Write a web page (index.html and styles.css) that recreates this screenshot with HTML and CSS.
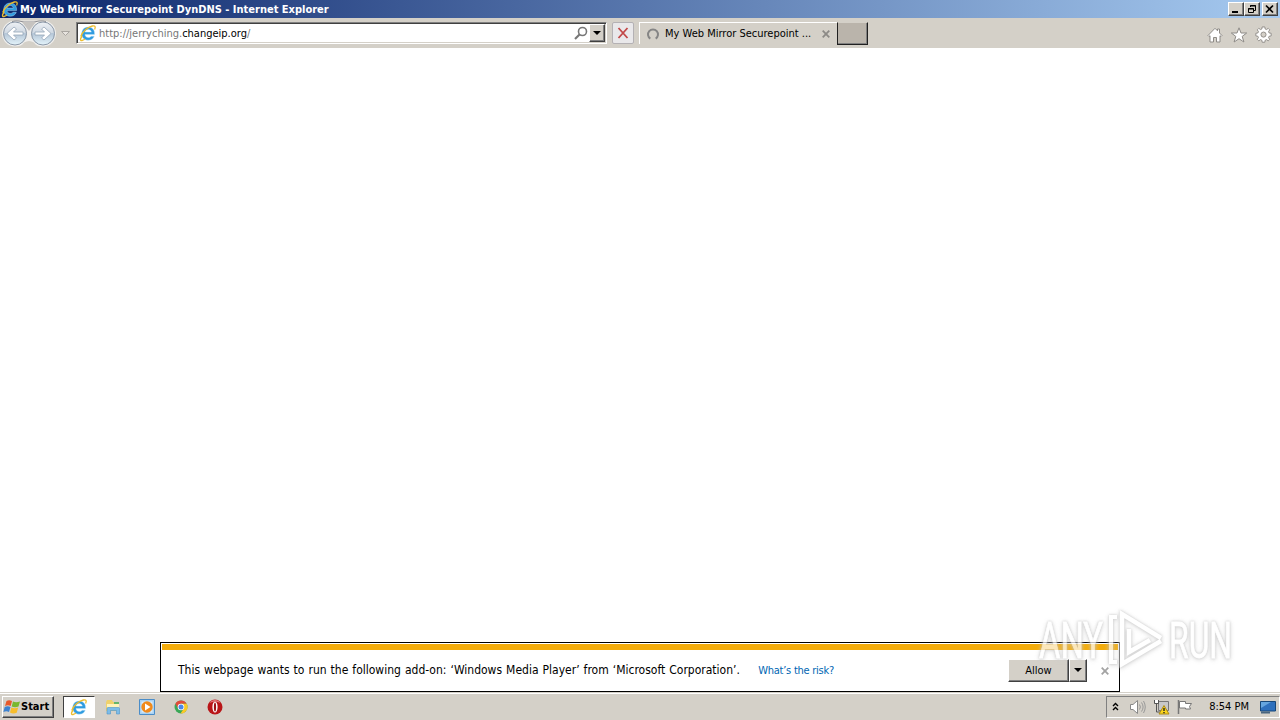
FILE: index.html
```html
<!DOCTYPE html>
<html lang="en">
<head>
    <meta charset="UTF-8">
    <title>My Web Mirror Securepoint DynDNS - Internet Explorer</title>
    <link rel="stylesheet" href="styles.css">
</head>
<body>
    <!-- shared icons -->
    <svg class="defs" width="0" height="0">
        <symbol id="ie" viewBox="0 0 18 18">
            <path d="M15.600 10.600H6c.2 1.900 1.500 2.900 3.300 2.900 1.300 0 2.200-.4 2.800-1.200h3.200c-1 2.500-3.100 3.900-6 3.900-3.900 0-6.600-2.600-6.600-6.500 0-3.900 2.700-6.600 6.600-6.600 4 0 6.600 2.800 6.300 7.500zM6 8.100h6.300C12.100 6.600 10.900 5.600 9.200 5.600S6.300 6.600 6 8.100z" fill="#2f9be0" stroke="#c9eafb" stroke-width=".4"/>
            <path d="M3.200 12C1 14.800.9 16.900 3 16.500c1-.2 2-.8 3-1.500M1.700 12.500C3.600 7.500 8.800 3.200 13.300 2c2.800-.7 3.600.6 2.300 3.400" fill="none" stroke="#edbd2d" stroke-width="1.300"/>
        </symbol>
        <symbol id="cross" viewBox="0 0 8 8">
            <path d="M.7.7l6.600 6.600M7.300.7L.7 7.300" fill="none" stroke="currentColor" stroke-width="1.800"/>
        </symbol>
    </svg>

    <div class="screen">
        <header class="titlebar">
            <svg class="title-icon" width="18" height="18"><use href="#ie"/></svg>
            <span class="title">My Web Mirror Securepoint DynDNS - Internet Explorer</span>
            <div class="window-buttons">
                <button class="win-btn"><svg width="12" height="10"><path d="M2 8h6" stroke="#000" stroke-width="2"/></svg></button>
                <button class="win-btn"><svg width="12" height="10"><path d="M4.500 3V1.500h5v5H8M4 2h6M2.500 4.500h5v4h-5zM2 5h6" fill="none" stroke="#000"/></svg></button>
                <button class="win-btn close"><svg width="12" height="10"><path d="M2 1.500l7 7M9 1.500l-7 7" stroke="#000" stroke-width="1.700"/></svg></button>
            </div>
        </header>

        <nav class="toolbar">
            <svg class="nav-buttons" width="72" height="30">
                <defs>
                    <linearGradient id="orb" x1="0" y1="0" x2="0" y2="1">
                        <stop offset="0" stop-color="#eef1f5"/>
                        <stop offset=".48" stop-color="#cfd8e2"/>
                        <stop offset=".5" stop-color="#b5c6d7"/>
                        <stop offset="1" stop-color="#e4f4fb"/>
                    </linearGradient>
                </defs>
                <path d="M15 2.500h28a13 13 0 0 1 0 26q-7 0-9-4-5-3-10 0-2 4-9 4a13 13 0 0 1 0-26z" fill="#efeeec"/>
                <path d="M12 3.500q3-1 7-.5l5 1h10l5-1q4-.5 7 .5" fill="none" stroke="#8f8f93"/>
                <path d="M22 4h14l-7 9z" fill="#c6c3c0"/>
                <circle cx="15" cy="15.500" r="11.500" fill="url(#orb)" stroke="#8b98a8"/>
                <circle cx="43" cy="15.500" r="11.500" fill="url(#orb)" stroke="#8b98a8"/>
                <path d="M7 15.500l7-6.500 2.500 2-3 3H23v3h-9.500l3 3-2.500 2z" fill="#fff" stroke="#95a6b8" stroke-width=".8"/>
                <path d="M51 15.500l-7-6.500-2.500 2 3 3H35v3h9.500l-3 3 2.500 2z" fill="#fff" stroke="#95a6b8" stroke-width=".8"/>
                <path d="M61.500 13.500h8l-4 4z" fill="#e8e4df" stroke="#aaa6a1"/>
            </svg>
            <div class="address">
                <svg class="address-icon" width="18" height="18"><use href="#ie"/></svg>
                <span class="url">http://jerryching.<b>changeip.org</b>/</span>
                <svg class="search" width="14" height="14"><circle cx="8.500" cy="5.500" r="4" fill="#fff" stroke="#777" stroke-width="1.600"/><path d="M5.500 8.500L1 13" stroke="#777" stroke-width="2.200"/></svg>
                <button class="drop"><svg width="8" height="4"><path d="M0 0h8L4 4z"/></svg></button>
            </div>
            <button class="stop"><svg width="12" height="12" viewBox="0 0 12 12"><path d="M1.500 1l9 10M10.500 1l-9 10" stroke="#c24848" stroke-width="1.800"/></svg></button>
            <div class="tab">
                <svg width="14" height="14"><path d="M4.300 11.700a5 5 0 1 1 5.400 0" fill="none" stroke="#858585" stroke-width="2"/></svg>
                <span class="tab-title">My Web Mirror Securepoint ...</span>
                <svg class="tab-close" width="8" height="8"><use href="#cross"/></svg>
            </div>
            <button class="new-tab"></button>
            <div class="tools">
                <svg width="16" height="16"><path d="M1 8.500L8 1.300l2.500 2.500V2h2v4L15 8.500l-1 1-1-.8V15H9.500v-4.500h-3V15H3V8.700l-1 .8z" fill="#fff" stroke="#8e8b87"/></svg>
                <svg width="18" height="16"><path d="M9 .8l2 5.200h5.700l-4.500 3.400 1.700 5.600L9 11.700 4.100 15l1.700-5.600L1.300 6H7z" fill="#fff" stroke="#8e8b87"/></svg>
                <svg width="17" height="17" viewBox="0 0 18 18">
                    <path d="M7.600 1h2.800l.4 2.200 1.300.6 1.900-1.300 1.600 1.600-1.300 1.900.6 1.300 2.200.4v2.800l-2.200.4-.6 1.300 1.300 1.900-1.600 1.600-1.900-1.300-1.300.6-.4 2.200H7.600l-.4-2.200-1.300-.6L4 15.700l-1.600-1.600 1.300-1.900-.6-1.300L.9 10.500V7.700l2.200-.4L3.700 6 2.400 4.100 4 2.500l1.900 1.300 1.300-.6z" fill="#fff" stroke="#8e8b87"/>
                    <circle cx="9" cy="9.100" r="2.700" fill="#d4d0c8" stroke="#8e8b87"/>
                </svg>
            </div>
        </nav>

        <main class="page">
            <div class="notice">
                <div class="notice-bar"></div>
                <div class="notice-body">
                    <span class="notice-text">This webpage wants to run the following add-on: ‘Windows Media Player’ from ‘Microsoft Corporation’.</span>
                    <a class="risk">What’s the risk?</a>
                    <div class="allow">
                        <button class="allow-main">Allow</button>
                        <button class="allow-drop"><svg width="8" height="4"><path d="M0 0h8L4 4z"/></svg></button>
                    </div>
                    <svg class="notice-close" width="8" height="8"><use href="#cross"/></svg>
                </div>
            </div>
        </main>

        <footer class="taskbar">
            <button class="start">
                <svg width="18" height="16" viewBox="0 0 18 16">
                    <path d="M3.500 2Q6 .5 9 2L7.700 7Q5 5.700 2 7z" fill="#e8592b"/>
                    <path d="M10 2.400q3 1.500 7 0L15.500 7.500q-3.500 1.500-6.800 0z" fill="#79b82d"/>
                    <path d="M1.700 8q3-1.300 5.800 0L6 13Q3.500 11.700.4 13z" fill="#3d82d0"/>
                    <path d="M8.400 8.500q3.300 1.400 6.800 0L13.700 13.800q-3.500 1.400-6.700-.2z" fill="#f7bd2b"/>
                </svg>
                <span>Start</span>
            </button>
            <div class="task active"><svg width="18" height="18"><use href="#ie"/></svg></div>
            <div class="task">
                <svg width="16" height="16"><path d="M1 3l1-2h5l1 2h6v9H1z" fill="#efd16c"/><path d="M2 5h12v5H2z" fill="#fff3ba"/><path d="M9 3h5v2H9z" fill="#66b56c"/><path d="M2 15V9.500q0-1 1-1h10.500q1 0 1 1V15h-3v-3.500h-6V15z" fill="#7cbce8" stroke="#4e96ca" stroke-width=".6"/></svg>
            </div>
            <div class="task">
                <svg width="16" height="16"><path d="M.5.500h15v15H.5z" fill="#a9d2f3" stroke="#4b8dc8"/><path d="M2.500 2.500h11v11h-11z" fill="#d9ecfa"/><circle cx="8" cy="8" r="5.700" fill="#f08a1c"/><path d="M6 4.500v7L11.500 8z" fill="#fff"/></svg>
            </div>
            <div class="task">
                <svg width="14" height="14" viewBox="0 0 14 14"><circle cx="7" cy="7" r="6.500" fill="#3aa757"/><path d="M1.400 3.700A6.500 6.500 0 0 1 12.700 3.800H7L4.200 8.600z" fill="#e14b3b"/><path d="M12.700 3.800A6.500 6.500 0 0 1 6.500 13.500L9.800 8.600 7 3.800z" fill="#fbc926"/><circle cx="7" cy="7" r="3.300" fill="#fff"/><circle cx="7" cy="7" r="2.500" fill="#4a87e8"/></svg>
            </div>
            <div class="task">
                <svg width="16" height="16"><circle cx="8" cy="8" r="7.500" fill="#b91518"/><path d="M2.500 4a6.500 6.500 0 0 1 11 0Q8 1 2.500 4z" fill="#e4787a"/><ellipse cx="8" cy="8" rx="2.600" ry="5.500" fill="#fff"/><ellipse cx="8" cy="8" rx="1.100" ry="4.500" fill="#9c1115"/></svg>
            </div>
            <div class="tray">
                <svg class="chevrons" width="7" height="9"><path d="M1 4l2.500-2.500L6 4M1 8l2.500-2.500L6 8" fill="none" stroke="#000" stroke-width="1.400"/></svg>
                <svg class="sound" width="17" height="16"><path d="M1.500 5.500H4L8.500 1.500v13L4 10.500H1.500z" fill="#fff" stroke="#888"/><path d="M10.500 5.500q1.800 2.500 0 5M12.500 3.500q3.200 4.500 0 9M14.500 2q3.500 6 0 12" fill="none" stroke="#999"/></svg>
                <svg class="network" width="17" height="16"><path d="M5.500 2.500h10v9h-10z" fill="#c8c8c8" stroke="#777"/><path d="M1.500 1v3.500h4V1M3.500 4.500V13H9" fill="none" stroke="#555"/><path d="M2 1h3v3H2z" fill="#fff"/><path d="M11 6.500l5 8.500H6z" fill="#fbd51c" stroke="#ad8b16"/><path d="M11 9v3M11 13v1.300" stroke="#222" stroke-width="1.400"/></svg>
                <svg class="flag" width="16" height="16"><path d="M1.500 1v14" stroke="#777" stroke-width="1.500"/><path d="M2.500 2.500h6v2h6l-2 3 1 2.500h-5V9h-6z" fill="#fff" stroke="#777"/></svg>
                <span class="clock">8:54 PM</span>
                <svg class="desktop" width="16" height="14"><path d="M.5 1.500h15v9.500H.5z" fill="#2e70bd" stroke="#174778"/><path d="M1 2h10L1 8z" fill="#65a5df"/><path d="M1 12.500h9" stroke="#49657f" stroke-width="2"/></svg>
            </div>
        </footer>

        <svg class="watermark" width="236" height="80" viewBox="0 0 236 80">
            <g class="mark">
                <text x="19" y="59" textLength="64" lengthAdjust="spacingAndGlyphs">ANY</text>
                <path d="M97 18h-6v45h6" stroke-width="4"/>
                <path d="M141 39L102 15v50l39-23M109 30v23l21-12" stroke-width="4.500"/>
                <text x="149" y="59" textLength="63" lengthAdjust="spacingAndGlyphs">RUN</text>
            </g>
        </svg>
    </div>
</body>
</html>
```

FILE: styles.css
```css
* {
    box-sizing: border-box;
}
body {
    margin: 0;
    font-family: "DejaVu Sans Condensed", "DejaVu Sans", sans-serif;
    font-size: 11px;
    color: #000;
    overflow: hidden;
}
svg {
    display: block;
    flex: none;
}
button {
    padding: 0;
    font: inherit;
    color: inherit;
    background: #d4d0c8;
    border: 1px solid;
    border-color: #fff #404040 #404040 #fff;
    box-shadow: inset -1px -1px #808080;
    display: flex;
    align-items: center;
    justify-content: center;
}
.defs {
    position: absolute;
}
.screen {
    position: relative;
    width: 1280px;
    height: 720px;
    display: flex;
    flex-direction: column;
    background: #fff;
    white-space: nowrap;
}
.titlebar {
    height: 18px;
    display: flex;
    align-items: center;
    padding: 0 2px 0 1px;
    background: linear-gradient(90deg, #0a246a, #a6caf0);
}
.title {
    margin-left: 1px;
    color: #fff;
    font-weight: bold;
}
.window-buttons {
    display: flex;
    margin-left: auto;
}
.win-btn {
    width: 16px;
    height: 14px;
}
.close {
    margin-left: 2px;
}
.toolbar {
    height: 30px;
    display: flex;
    align-items: center;
    background: #d4d0c8;
}
.address {
    width: 531px;
    height: 22px;
    margin-left: 4px;
    padding: 0 1px 0 2px;
    display: flex;
    align-items: center;
    background: #fff;
    border: 1px solid;
    border-color: #808080 #fff #fff #808080;
    box-shadow: inset 1px 1px #404040, inset -1px -1px #d4d0c8;
}
.url {
    margin-left: 2px;
    color: #777;
}
.url b {
    font-weight: normal;
    color: #000;
}
.search {
    margin-left: auto;
}
.drop {
    width: 16px;
    height: 18px;
    margin-left: 1px;
}
.stop {
    width: 22px;
    height: 22px;
    margin-left: 5px;
    background: #e9e8ea;
    border: 1px solid #b4b1b4;
    border-radius: 2px;
    box-shadow: none;
}
.tab {
    width: 198px;
    height: 22px;
    margin-left: 5px;
    padding: 0 7px 0 6px;
    display: flex;
    align-items: center;
    border-top: 1px solid #fff;
    border-left: 1px solid #fff;
}
.tab-title {
    margin-left: 5px;
}
.tab-close {
    margin-left: auto;
    color: #8c8a86;
}
.new-tab {
    width: 31px;
    height: 23px;
    background: #bab4ab;
    border-color: #d4d0c8 #202020 #202020 #202020;
}
.tools {
    display: flex;
    align-items: center;
    gap: 7px;
    margin: 3px 8px 0 auto;
}
.page {
    flex: 1;
    display: flex;
    align-items: flex-end;
    justify-content: center;
    background: #fff;
}
.notice {
    width: 960px;
    height: 50px;
    padding: 1px;
    background: #fff;
    border: 1px solid #000;
}
.notice-bar {
    height: 6px;
    background: #f3ac0b;
}
.notice-body {
    height: 40px;
    display: flex;
    align-items: center;
    padding: 0 9px 0 16px;
}
.notice-text {
    font-size: 12px;
    word-spacing: 0.6px;
}
.risk {
    margin-left: auto;
    color: #0066b3;
    letter-spacing: -0.25px;
}
.allow {
    display: flex;
    margin-left: 174px;
}
.allow-main {
    width: 61px;
    height: 23px;
}
.allow-drop {
    width: 18px;
    height: 23px;
}
.notice-close {
    margin: 2px 0 0 14px;
    color: #a3a3a3;
}
.taskbar {
    height: 28px;
    display: flex;
    align-items: center;
    padding: 1px 0 1px 2px;
    background: #d4d0c8;
    border-top: 1px solid #d4d0c8;
    box-shadow: inset 0 1px #fff;
}
.start {
    width: 52px;
    height: 22px;
    justify-content: flex-start;
    font-weight: bold;
}
.task {
    width: 34px;
    height: 22px;
    display: flex;
    align-items: center;
    justify-content: center;
}
.active {
    width: 32px;
    margin-left: 9px;
    margin-right: 1px;
    background: #fff;
    border: 1px solid;
    border-color: #404040 #fff #fff #404040;
}
.tray {
    width: 174px;
    height: 22px;
    margin-left: auto;
    padding: 0 3px 0 5px;
    display: flex;
    align-items: center;
    border: 1px solid;
    border-color: #808080 #fff #fff #808080;
}
.sound {
    margin-left: 10px;
}
.network {
    margin-left: 7px;
}
.flag {
    margin-left: 7px;
}
.clock {
    margin-left: auto;
}
.desktop {
    margin-left: 11px;
}
.watermark {
    position: absolute;
    left: 1020px;
    top: 599px;
    font-family: Roboto, sans-serif;
    font-size: 50px;
}
.mark {
    opacity: 0.72;
    filter: drop-shadow(0 0 1px #bbb) drop-shadow(0 1px 2px #ccc);
}
.mark text {
    fill: #fff;
    stroke: #fff;
    stroke-width: 0.8;
}
.mark path {
    fill: none;
    stroke: #fff;
}
```
